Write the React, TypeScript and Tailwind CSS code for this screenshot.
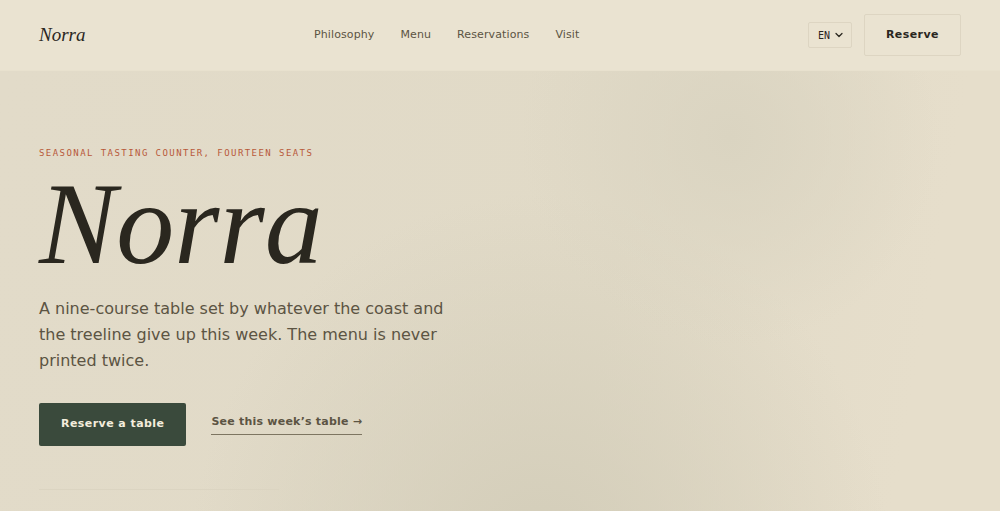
import { ChevronDown } from 'lucide-react';

const navLinks = [
  { label: 'Philosophy', href: '#philosophy' },
  { label: 'Menu', href: '#menu' },
  { label: 'Reservations', href: '#reservations' },
  { label: 'Visit', href: '#visit' },
];

function Header() {
  return (
    <header className="border-b border-[#e8e1ce] bg-[#eae3d1]">
      <div className="flex items-center justify-between px-[39px] py-[14px]">
        {/* Logo */}
        <a href="#top" className="font-['Liberation_Serif',serif] text-[19px] leading-6 italic text-[#2a271f]">
          Norra
        </a>

        {/* Navigation */}
        <nav className="flex items-center gap-[26px]">
          {navLinks.map((link) => (
            <a key={link.href} href={link.href} className="text-[11px] leading-4 tracking-[0.01em] text-[#5c5443]">
              {link.label}
            </a>
          ))}
        </nav>

        {/* Language + booking */}
        <div className="flex items-center gap-3">
          <div className="relative">
            <select
              aria-label="Language"
              defaultValue="en"
              className="block h-[26px] w-11 appearance-none rounded-xs border border-[#ddd5c2] bg-transparent pl-[9px] font-['DejaVu_Sans_Mono',monospace] text-[10px] text-[#2a271f]"
            >
              <option value="en">EN</option>
              <option value="sv">SV</option>
            </select>
            <ChevronDown className="pointer-events-none absolute top-[7px] right-[7px] h-3 w-3 text-[#2a271f]" strokeWidth={2.5} />
          </div>
          <button className="h-[42px] rounded-xs border border-[#ddd5c2] px-[21px] text-[11px] font-bold tracking-[0.04em] text-[#2a271f]">
            Reserve
          </button>
        </div>
      </div>
    </header>
  );
}

function Hero() {
  return (
    <section className="flex-1 overflow-hidden bg-[radial-gradient(circle_at_73%_15%,#dad4c1_0%,#dad4c100_210px),radial-gradient(ellipse_350px_370px_at_54%_112%,#d3cdb9_0%,#d3cdb900_100%),linear-gradient(100deg,#e2dbc9_0%,#e1dac7_60%,#e6decb_90%)] px-[39px] pt-[76px]">
      <p className="font-['DejaVu_Sans_Mono',monospace] text-[9px] leading-3 tracking-[0.16em] text-[#b8593a] uppercase">
        Seasonal tasting counter, fourteen seats
      </p>
      <h1 className="mt-[9px] font-['Liberation_Serif',serif] text-[116px] leading-[112px] italic text-[#2a271f]">
        Norra
      </h1>
      <p className="mt-4 max-w-[410px] text-[16px] leading-[26px] text-[#5c5443]">
        A nine-course table set by whatever the coast and the treeline give up this week. The menu is never printed
        twice.
      </p>

      <div className="mt-[29px] flex items-center gap-[25px]">
        <button className="h-[43px] rounded-xs bg-[#3a4a3c] px-[22px] text-[11px] font-bold tracking-[0.04em] text-[#f3eddd]">
          Reserve a table
        </button>
        <a href="#menu" className="border-b border-[#7d7561] pb-1 text-[11px] leading-4 font-bold tracking-[0.02em] text-[#5c5443]">
          See this week’s table →
        </a>
      </div>

      <hr className="mt-[43px] w-60 border-[#dbd4c1]" />
    </section>
  );
}

export default function App() {
  return (
    <div id="top" className="flex min-h-screen flex-col font-['DejaVu_Sans',sans-serif]">
      <Header />
      <Hero />
    </div>
  );
}
